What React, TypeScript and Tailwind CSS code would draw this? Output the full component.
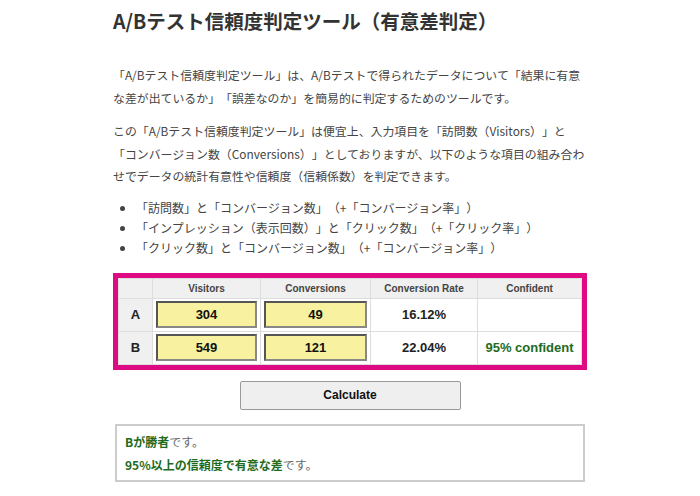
import { useState } from "react"

const jp = { fontFamily: '"Noto Sans CJK JP", "Noto Sans", sans-serif' }
const latin = { fontFamily: '"Liberation Sans", Arial, sans-serif' }

const App = () => {
  const [visitorsA, setVisitorsA] = useState("304")
  const [convA, setConvA] = useState("49")
  const [visitorsB, setVisitorsB] = useState("549")
  const [convB, setConvB] = useState("121")

  const rate = (c: string, v: string) => ((Number(c) / Number(v)) * 100).toFixed(2) + "%"

  const inputCls =
    "w-full h-[27px] bg-[#f8f19f] border-2 border-[#555] border-r-[#888] border-b-[#888] text-center text-[13px] font-bold text-[#111] outline-none"

  return (
    <div className="min-h-screen bg-white text-[#333] [text-spacing-trim:space-all]" style={jp}>
      <div className="w-[474px] mx-auto">
        <h1 className="pt-[7px] text-[19.5px] font-bold leading-[28px] text-[#333]">
          A/Bテスト信頼度判定ツール（有意差判定）
        </h1>

        <p className="mt-[29px] text-[11.9px] leading-[22.5px] text-[#444]">
          「A/Bテスト信頼度判定ツール」は、A/Bテストで得られたデータについて「結果に有意な差が出ているか」「誤差なのか」を簡易的に判定するためのツールです。
        </p>
        <p className="mt-[11px] text-[11.9px] leading-[22.5px] text-[#444]">
          この「A/Bテスト信頼度判定ツール」は便宜上、入力項目を「訪問数（Visitors）」と「コンバージョン数（Conversions）」としておりますが、以下のような項目の組み合わせでデータの統計有意性や信頼度（信頼係数）を判定できます。
        </p>

        <ul className="mt-[10px] pl-[23px] list-disc text-[12px] leading-[20px] text-[#444]">
          <li>「訪問数」と「コンバージョン数」（+「コンバージョン率」）</li>
          <li>「インプレッション（表示回数）」と「クリック数」（+「クリック率」）</li>
          <li>「クリック数」と「コンバージョン数」（+「コンバージョン率」）</li>
        </ul>

        <div className="mt-[15px] border-[5px] border-[#dd0a84]">
          <table className="w-full border-collapse" style={latin}>
            <thead>
              <tr className="bg-[#f0f0f0] h-[20px] text-[10px] font-bold text-[#444]">
                <th className="w-[34px] border border-[#dddddd]" />
                <th className="w-[108px] border border-[#dddddd]">Visitors</th>
                <th className="w-[110px] border border-[#dddddd]">Conversions</th>
                <th className="w-[107px] border border-[#dddddd]">Conversion Rate</th>
                <th className="border border-[#dddddd]">Confident</th>
              </tr>
            </thead>
            <tbody className="text-[13px] font-bold text-[#222]">
              <tr className="h-[33px]">
                <td className="bg-[#f0f0f0] border border-[#dddddd] text-center">A</td>
                <td className="border border-[#dddddd] px-[3px]">
                  <input className={inputCls} value={visitorsA} onChange={(e) => setVisitorsA(e.target.value)} />
                </td>
                <td className="border border-[#dddddd] px-[3px]">
                  <input className={inputCls} value={convA} onChange={(e) => setConvA(e.target.value)} />
                </td>
                <td className="border border-[#dddddd] text-center">{rate(convA, visitorsA)}</td>
                <td className="border border-[#dddddd] text-center" />
              </tr>
              <tr className="h-[33px]">
                <td className="bg-[#f0f0f0] border border-[#dddddd] text-center">B</td>
                <td className="border border-[#dddddd] px-[3px]">
                  <input className={inputCls} value={visitorsB} onChange={(e) => setVisitorsB(e.target.value)} />
                </td>
                <td className="border border-[#dddddd] px-[3px]">
                  <input className={inputCls} value={convB} onChange={(e) => setConvB(e.target.value)} />
                </td>
                <td className="border border-[#dddddd] text-center">{rate(convB, visitorsB)}</td>
                <td className="border border-[#dddddd] text-center text-[#1e6b1e]">95% confident</td>
              </tr>
            </tbody>
          </table>
        </div>

        <div className="mt-[11px] flex justify-center">
          <button
            className="w-[221px] h-[29px] bg-[#efefef] border border-[#999] rounded-[2px] text-[12px] font-bold text-[#111]"
            style={latin}
          >
            Calculate
          </button>
        </div>

        <div className="mt-[14px] mx-[2px] border-2 border-[#cccccc] px-[8px] pt-[4px] pb-[4px] text-[12px] leading-[23px] text-[#666]">
          <div>
            <span className="font-bold text-[#1e6b1e]">Bが勝者</span>です。
          </div>
          <div>
            <span className="font-bold text-[#1e6b1e]">95%以上の信頼度で有意な差</span>です。
          </div>
        </div>
      </div>
    </div>
  )
}

export default App
